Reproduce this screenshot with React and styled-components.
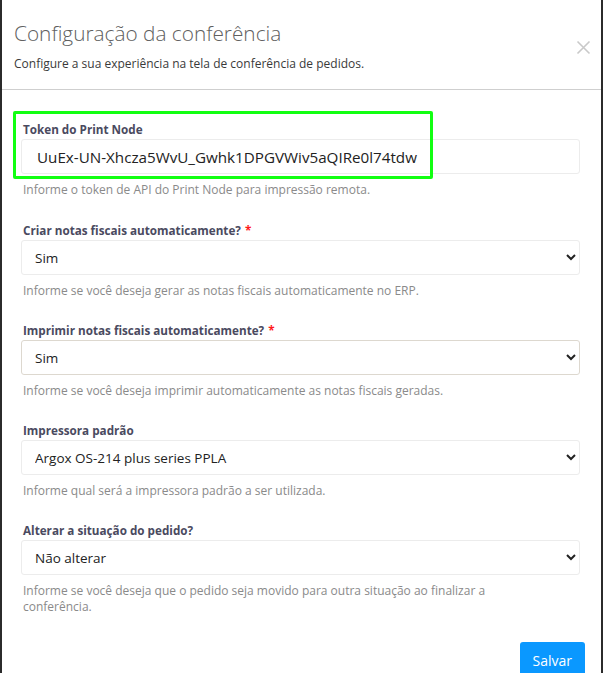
import React from "react";
import styled, { createGlobalStyle } from "styled-components";

const GlobalStyle = createGlobalStyle`
  html, body {
    margin: 0;
    padding: 0;
    height: 100%;
    overflow: hidden;
    background: #2b2b2b;
  }
  body {
    font-family: "Open Sans", "Liberation Sans", sans-serif;
  }
`;

const Page = styled.div`
  padding-left: 2px;
  width: 599px;
`;

const Modal = styled.div`
  background: #fff;
  min-height: 720px;
`;

const Header = styled.div`
  display: flex;
  align-items: flex-start;
  justify-content: space-between;
  padding: 20px 10px 16px 12px;
  border-bottom: 1px solid #cfcfcf;
`;

const HeaderText = styled.div`
  display: flex;
  flex-direction: column;
`;

const Title = styled.h4`
  margin: 0;
  font-size: 20.8px;
  line-height: 26px;
  font-weight: 300;
  color: #606060;
`;

const Subtitle = styled.p`
  margin: 9px 0 0 0;
  font-size: 12px;
  line-height: 18px;
  color: #3a3a3a;
`;

const CloseButton = styled.button`
  border: none;
  background: none;
  padding: 0;
  margin: 20px 0 0 0;
  width: 15px;
  height: 15px;
  cursor: pointer;
  display: flex;
`;

const Body = styled.div`
  padding: 30px 21px 0 19px;
`;

const Group = styled.div`
  position: relative;
  margin-bottom: 22px;

  &:first-child {
    margin-bottom: 23px;
  }
`;

const Highlight = styled.div`
  position: absolute;
  left: -8px;
  top: -9px;
  width: 414px;
  height: 62px;
  border: 3px solid #11ff11;
  border-radius: 2px;
  pointer-events: none;
`;

const Label = styled.label`
  display: block;
  font-size: 11.7px;
  line-height: 18px;
  font-weight: 700;
  color: #4a4a60;
  margin: 0 0 1px 2px;
`;

const Required = styled.span`
  color: #ff1a1a;
  margin-left: 4px;
`;

const Input = styled.input`
  box-sizing: border-box;
  display: block;
  width: 100%;
  height: 35px;
  border: 1px solid #ececec;
  border-radius: 3px;
  padding: 0 15px;
  font-family: inherit;
  font-size: 15.2px;
  color: #222;
  outline: none;
`;

const Select = styled.select`
  box-sizing: border-box;
  display: block;
  width: 100%;
  height: 35px;
  border: 1px solid ${(p) => (p.$active ? "#ddd8cf" : "#ececec")};
  border-radius: 3px;
  padding: 0 8px 0 9px;
  font-family: inherit;
  font-size: 13.5px;
  color: #222;
  background: #fff;
  outline: none;
`;

const Help = styled.p`
  margin: 8px 0 0 2px;
  font-size: 12px;
  line-height: 16px;
  color: #8a8a8a;
  max-width: ${(p) => (p.$narrow ? "470px" : "none")};
`;

const Footer = styled.div`
  display: flex;
  justify-content: flex-end;
  padding: 5px 16px 20px 16px;
`;

const SaveButton = styled.button`
  background: #0a98ff;
  color: #fff;
  border: none;
  border-radius: 3px;
  height: 36px;
  padding: 0 13px;
  font-family: inherit;
  font-size: 14px;
  cursor: pointer;
`;

const fields = [
  {
    label: "Criar notas fiscais automaticamente?",
    required: true,
    value: "Sim",
    help: "Informe se você deseja gerar as notas fiscais automaticamente no ERP.",
  },
  {
    label: "Imprimir notas fiscais automaticamente?",
    required: true,
    value: "Sim",
    active: true,
    help: "Informe se você deseja imprimir automaticamente as notas fiscais geradas.",
  },
  {
    label: "Impressora padrão",
    value: "Argox OS-214 plus series PPLA",
    help: "Informe qual será a impressora padrão a ser utilizada.",
  },
  {
    label: "Alterar a situação do pedido?",
    value: "Não alterar",
    narrow: true,
    help: "Informe se você deseja que o pedido seja movido para outra situação ao finalizar a conferência.",
  },
];

const App = () => {
  return (
    <React.Fragment>
      <GlobalStyle />
      <Page>
        <Modal>
          <Header>
            <HeaderText>
              <Title>Configuração da conferência</Title>
              <Subtitle>
                Configure a sua experiência na tela de conferência de pedidos.
              </Subtitle>
            </HeaderText>
            <CloseButton aria-label="Fechar">
              <svg width="15" height="15" viewBox="0 0 15 15">
                <path
                  d="M1.5 1.5 L13.5 13.5 M13.5 1.5 L1.5 13.5"
                  stroke="#c9c9c9"
                  strokeWidth="1.6"
                  fill="none"
                />
              </svg>
            </CloseButton>
          </Header>
          <Body>
            <Group>
              <Highlight />
              <Label>Token do Print Node</Label>
              <Input
                defaultValue="UuEx-UN-Xhcza5WvU_Gwhk1DPGVWiv5aQIRe0l74tdw"
                readOnly
              />
              <Help>
                Informe o token de API do Print Node para impressão remota.
              </Help>
            </Group>
            {fields.map((f) => (
              <Group key={f.label}>
                <Label>
                  {f.label}
                  {f.required && <Required>*</Required>}
                </Label>
                <Select $active={f.active} defaultValue={f.value}>
                  <option>{f.value}</option>
                </Select>
                <Help $narrow={f.narrow}>{f.help}</Help>
              </Group>
            ))}
          </Body>
          <Footer>
            <SaveButton>Salvar</SaveButton>
          </Footer>
        </Modal>
      </Page>
    </React.Fragment>
  );
};

export default App;
